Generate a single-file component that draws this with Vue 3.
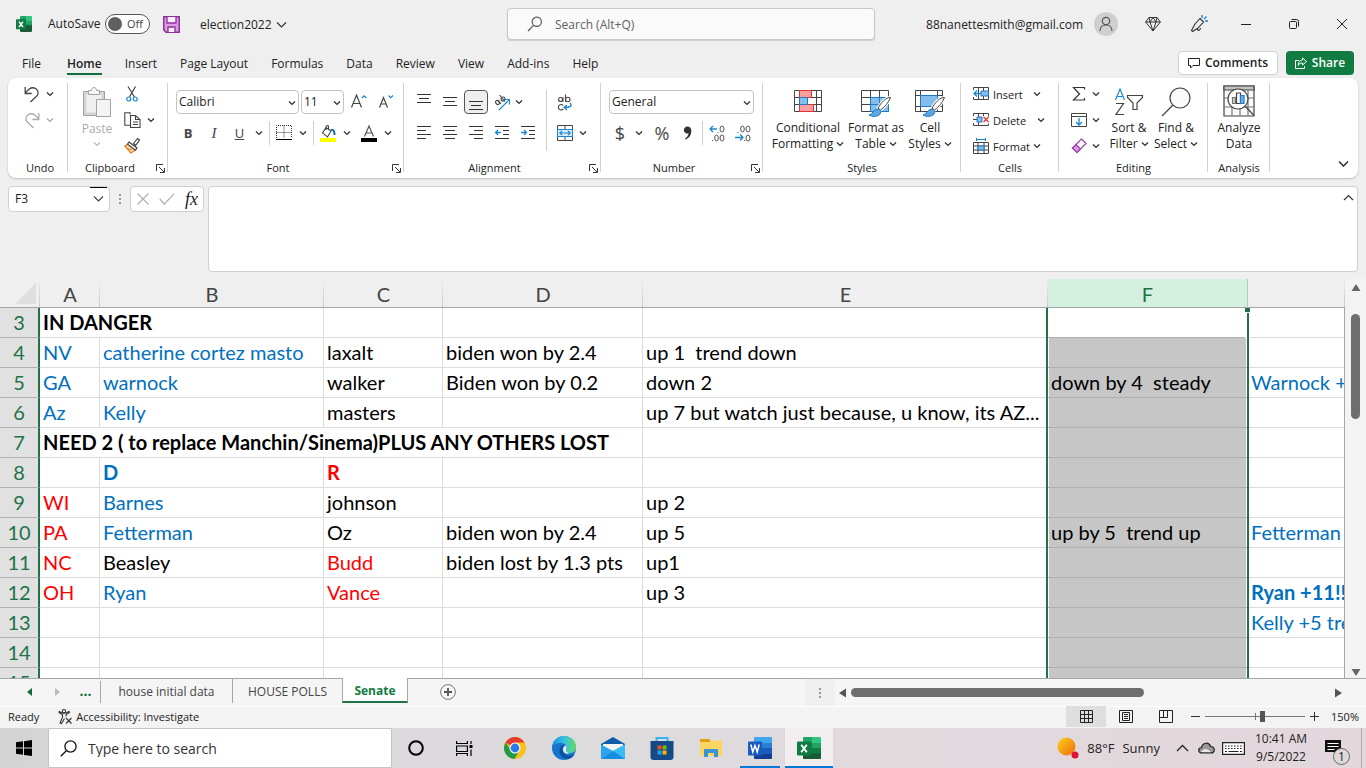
<script setup>
import { h, ref } from 'vue'

const Chevron = (props) =>
  h('svg', { class: 'chev', width: 8, height: 8, viewBox: '0 0 8 8', fill: 'none', stroke: props.color || '#333', 'stroke-width': 1.4 }, [
    h('path', { d: 'M1 2.5 4 5.4 7 2.5' })
  ])
Chevron.props = ['color']

const Launcher = () =>
  h('svg', { width: 9, height: 9, viewBox: '0 0 9 9', fill: 'none', stroke: '#333', 'stroke-width': 1 }, [
    h('path', { d: 'M.5 7V.5H7M3 3l5 5M8.5 4v4.500H4' })
  ])

const tabs = ['File', 'Home', 'Insert', 'Page Layout', 'Formulas', 'Data', 'Review', 'View', 'Add-ins', 'Help']
const active = ref('Home')

const columns = [
  { name: 'A', cls: 'col-a' },
  { name: 'B', cls: 'col-b' },
  { name: 'C', cls: 'col-c' },
  { name: 'D', cls: 'col-d' },
  { name: 'E', cls: 'col-e' },
  { name: 'F', cls: 'col-f' },
  { name: '', cls: 'col-g' }
]

const c = (text, tone = '', span = 1) => ({ text, tone, span })
const e = () => c('')
const rows = [
  { n: 3, cells: [c('IN DANGER', 'bold', 2), e(), e(), e(), e(), e()] },
  { n: 4, cells: [c('NV', 'blue'), c('catherine cortez masto', 'blue'), c('laxalt'), c('biden won by 2.4'), c('up 1  trend down'), e(), e()] },
  { n: 5, cells: [c('GA', 'blue'), c('warnock', 'blue'), c('walker'), c('Biden won by 0.2'), c('down 2'), c('down by 4  steady'), c('Warnock +4', 'blue')] },
  { n: 6, cells: [c('Az', 'blue'), c('Kelly', 'blue'), c('masters'), e(), c('up 7 but watch just because, u know, its AZ...'), e(), e()] },
  { n: 7, cells: [c('NEED 2 ( to replace Manchin/Sinema)PLUS ANY OTHERS LOST', 'bold', 4), e(), e(), e()] },
  { n: 8, cells: [e(), c('D', 'blue bold'), c('R', 'red bold'), e(), e(), e(), e()] },
  { n: 9, cells: [c('WI', 'red'), c('Barnes', 'blue'), c('johnson'), e(), c('up 2'), e(), e()] },
  { n: 10, cells: [c('PA', 'red'), c('Fetterman', 'blue'), c('Oz'), c('biden won by 2.4'), c('up 5'), c('up by 5  trend up'), c('Fetterman', 'blue')] },
  { n: 11, cells: [c('NC', 'red'), c('Beasley'), c('Budd', 'red'), c('biden lost by 1.3 pts'), c('up1'), e(), e()] },
  { n: 12, cells: [c('OH', 'red'), c('Ryan', 'blue'), c('Vance', 'red'), e(), c('up 3'), e(), c('Ryan +11!!', 'blue bold')] },
  { n: 13, cells: [e(), e(), e(), e(), e(), e(), c('Kelly +5 trend', 'blue')] },
  { n: 14, cells: [e(), e(), e(), e(), e(), e(), e()] },
  { n: 15, cells: [e(), e(), e(), e(), e(), e(), e()] }
]
const isF = (row, i) => i === row.cells.length - 2
</script>

<template>
  <div class="app">
    <header class="titlebar">
      <div class="tb-left">
        <svg class="xl-logo" width="16" height="16" viewBox="0 0 24 24">
          <path fill="#21a366" d="M8 0h8v8H6V2a2 2 0 0 1 2-2z" /><path fill="#33c481" d="M15 0h8a1 1 0 0 1 1 1v7h-9z" />
          <path fill="#107c41" d="M6 8h9v8H6zM15 8h9v8h-9z" /><path fill="#21a366" d="M15 8h9v5h-9z" /><path fill="#185c37" d="M6 15h18v7a2 2 0 0 1-2 2H8a2 2 0 0 1-2-2z" />
          <rect y="5" width="15" height="15" rx="1" fill="#107c41" /><path d="M4.500 8.500l6 8M10.500 8.500l-6 8" stroke="#fff" stroke-width="2.200" />
        </svg>
        <label class="autosave">AutoSave
          <span class="toggle"><input type="checkbox" /><span>Off</span></span>
        </label>
        <button class="save" aria-label="Save">
          <svg width="17" height="17" viewBox="0 0 17 17"><path d="M.8.800h15.400v15.400H3L.8 14z" fill="#dc9be2" stroke="#8d2f9c" stroke-width="1.500" /><path d="M4 1v6h9V1M5 16v-5h7v5" fill="#f7f0f8" stroke="#8d2f9c" stroke-width="1.300" /></svg>
        </button>
        <button class="docname">election2022
          <svg width="11" height="8" viewBox="0 0 11 8" fill="none" stroke="#333" stroke-width="1.200"><path d="M1 1.500 5.500 6 10 1.500" /></svg>
        </button>
      </div>
      <label class="search">
        <svg width="16" height="16" viewBox="0 0 16 16" fill="none" stroke="#555" stroke-width="1.200"><circle cx="9.800" cy="5.800" r="4.600" /><path d="M6.500 9.300 1 15" /></svg>
        <input type="text" aria-label="Search" placeholder="Search (Alt+Q)" />
      </label>
      <div class="tb-right">
        <span class="email">88nanettesmith@gmail.com</span>
        <button class="avatar" aria-label="Account">
          <svg width="16" height="16" viewBox="0 0 16 16" fill="none" stroke="#555" stroke-width="1.200"><circle cx="8" cy="5" r="3.700" /><path d="M2 15c0-8 12-8 12 0" /></svg>
        </button>
        <button class="tb-btn" aria-label="Premium">
          <svg width="16" height="16" viewBox="0 0 16 16" fill="none" stroke="#333" stroke-width="1"><path d="M4 1.500h8L15.400 6 8 15 .6 6zM.6 6h14.800M4 1.500 5 6l3 9 3-9 1-4.500M5 6l3-4.500L11 6" /></svg>
        </button>
        <button class="tb-btn" aria-label="What's new">
          <svg width="18" height="18" viewBox="0 0 18 18" fill="none" stroke="#333" stroke-width="1.100"><path d="M10 3.500 13.500 7 8 13l-5.500 3.500-1-1L5 9zM7 14c1 2 3 2 3.500-1" /><path stroke="#1a86d0" stroke-width="1.400" d="M12 3V0M14 4l2.500-2.500M15 6h3" /></svg>
        </button>
        <button class="win-btn" aria-label="Minimize"><svg width="12" height="12" viewBox="0 0 12 12" stroke="#222"><path d="M1 6.500h10" /></svg></button>
        <button class="win-btn" aria-label="Restore"><svg width="12" height="12" viewBox="0 0 12 12" fill="none" stroke="#222"><rect x="1.500" y="3.500" width="7" height="7" rx="1" /><path d="M3.500 1.500h5a2 2 0 0 1 2 2v5" /></svg></button>
        <button class="win-btn" aria-label="Close"><svg width="12" height="12" viewBox="0 0 12 12" stroke="#222"><path d="M1 1l10 10M11 1 1 11" /></svg></button>
      </div>
    </header>

    <nav class="menu">
      <button v-for="t in tabs" :key="t" class="menu-tab" :class="{ on: t === active }" @click="active = t">{{ t }}</button>
      <span class="grow"></span>
      <button class="comments">
        <svg width="12" height="12" viewBox="0 0 12 12" fill="none" stroke="#222"><path d="M.5 1.500h11v7H5L2.500 11V8.500h-2z" /></svg>Comments
      </button>
      <button class="share">
        <svg width="12" height="13" viewBox="0 0 12 13" fill="none" stroke="#fff"><path d="M4 3.500H.5v8h9V9M7.500 1l4 3.500-4 3.500V6C5 6 4 7 3.200 8.500 3.200 5 5 3 7.500 3z" /></svg>Share
      </button>
    </nav>

    <section class="ribbon">
      <div class="group g-undo">
        <div class="stack">
          <div class="row26 undo-row">
            <button aria-label="Undo"><svg width="16" height="17" viewBox="0 0 16 17" fill="none" stroke="#444" stroke-width="1.300"><path d="M1.200 1v6.500h6.500M1.500 7C5 2 9 .8 12 2.800c3 2.200 2.500 5.500.5 7.500L6.500 16" /></svg></button>
            <button aria-label="Undo list"><Chevron /></button>
          </div>
          <div class="row26 undo-row">
            <button aria-label="Redo"><svg width="16" height="17" viewBox="0 0 16 17" fill="none" stroke="#aaa" stroke-width="1.300"><path d="M14.800 1v6.500H8.300M14.500 7C11 2 7 .8 4 2.800 1 5 1.500 8.300 3.500 10.300L9.500 16" /></svg></button>
            <button aria-label="Redo list"><Chevron color="#aaa" /></button>
          </div>
        </div>
        <div class="glabel"><span>Undo</span></div>
      </div>

      <div class="group g-clip">
        <div class="gbody">
          <button class="big paste">
            <svg width="28" height="30" viewBox="0 0 28 30" stroke="#a3a3a3"><path d="M.5 4.500h21v24H.5z" fill="#d4d4d4" /><path d="M3.500 7.500h15v18h-15z" fill="#f0f0f0" stroke="none" /><path d="M5.500 7.500v-4h3c0-4 5-4 5 0h3v4z" fill="#f6f6f6" /><path d="M13.500 12.500h14v17h-14z" fill="#f4f4f4" /></svg>
            <span>Paste</span><Chevron color="#bbb" />
          </button>
          <div class="stack clip-stack">
            <div class="row26"><button aria-label="Cut"><svg width="12" height="16" viewBox="0 0 12 16" fill="none" stroke="#444" stroke-width="1.200"><path d="M2 .5 8.500 11M9.500.5 3.500 11" /><g stroke="#1a86d0"><circle cx="2.700" cy="13" r="2" /><circle cx="9.200" cy="13" r="2" /></g></svg></button></div>
            <div class="row26"><button aria-label="Copy"><svg width="17" height="16" viewBox="0 0 17 16" fill="#fff" stroke="#444" stroke-width="1.100"><path d="M6 2.500V.7H.8v12.600h5" /><path d="M6.500 3.500h5l4.500 4v8H6.500zM11.500 3.500v4H16M9 10h5M9 12.500h5" /></svg></button><button aria-label="Copy options"><Chevron /></button></div>
            <div class="row26"><button aria-label="Format Painter"><svg width="16" height="16" viewBox="0 0 16 16" fill="none" stroke="#444" stroke-width="1.200"><path d="m9.500 5.500 4-5 2 1.500-4 5.500z" fill="#fff" /><path d="M3.500 6.500.8 8l6 7 4.700-3z" fill="#fce0bd" stroke="#e07a10" /><path d="M4 11l4 .5" stroke="#e07a10" /><path d="M5 4 13 10l-1.500 2.200L3.500 6.200z" fill="#fff" /></svg></button></div>
          </div>
        </div>
        <div class="glabel"><span>Clipboard</span><button class="launch" aria-label="Clipboard options"><Launcher /></button></div>
      </div>

      <div class="group g-font">
        <div class="two">
          <div class="font-a">
            <span class="combo"><select aria-label="Font"><option>Calibri</option></select><Chevron /></span>
            <span class="combo"><select aria-label="Font size"><option>11</option></select><Chevron /></span>
            <button aria-label="Increase font size"><svg width="17" height="16" viewBox="0 0 17 16" fill="none" stroke="#444" stroke-width="1.200"><path d="M.5 13.500 5.500 1l5 12.500M2.200 9.500h6.600" /><path d="m11 4 2.200-2.200L15.400 4" stroke="#1a86d0" /></svg></button>
            <button aria-label="Decrease font size"><svg width="16" height="16" viewBox="0 0 16 16" fill="none" stroke="#444" stroke-width="1.200"><path d="M.5 13.500 4.500 3.500l4 10M2 10h5" /><path d="m9.500 1.500 2.200 2.200L14 1.500" stroke="#1a86d0" /></svg></button>
          </div>
          <div class="font-b">
            <button class="fmt"><b>B</b></button><button class="fmt"><i>I</i></button><button class="fmt"><u>U</u></button><button aria-label="Underline styles"><Chevron /></button>
            <i class="vsep"></i>
            <button aria-label="Borders"><svg width="16" height="16" viewBox="0 0 16 16" fill="none" stroke="#333"><path stroke-dasharray="1 1" d="M.5 13V.5h15V13M8 .5V13M.5 7.500h15" /><path d="M0 14.500h16" stroke="#000" /></svg></button><button aria-label="Border styles"><Chevron /></button>
            <i class="vsep"></i>
            <button aria-label="Fill color"><svg width="16" height="17" viewBox="0 0 16 17" fill="none" stroke="#444" stroke-width="1.100"><path d="M6 2.500 2.500 8l5 4L11 6zM6 5V1.500q2-2 2.500 0V5" fill="#fff" /><path d="M11 5c3-1 3.500 2 3.500 5" stroke="#1a6fb5" stroke-width="2" /><path d="M0 15h16" stroke="#ff0" stroke-width="4" /></svg></button><button aria-label="Fill colors"><Chevron /></button>
            <span></span>
            <button aria-label="Font color"><svg width="16" height="17" viewBox="0 0 16 17" fill="none" stroke="#555" stroke-width="1.200"><path d="M3.500 11.500 8 1l4.500 10.500M5 8h6" /><path d="M0 15h16" stroke="#000" stroke-width="4" /></svg></button><button aria-label="Font colors"><Chevron /></button>
          </div>
        </div>
        <div class="glabel"><span>Font</span><button class="launch" aria-label="Font options"><Launcher /></button></div>
      </div>

      <div class="group g-align">
        <div class="gbody">
          <div class="two">
            <div class="al-row">
              <button aria-label="Top align"><svg width="14" height="16" viewBox="0 0 14 16" stroke="#333"><path d="M0 .5h14M2 4.500h10M0 8.500h14" /></svg></button>
              <button aria-label="Middle align"><svg width="14" height="16" viewBox="0 0 14 16" stroke="#333"><path d="M0 3.500h14M2 7.500h10M0 11.500h14" /></svg></button>
              <button class="pressed" aria-label="Bottom align"><svg width="14" height="16" viewBox="0 0 14 16" stroke="#333"><path d="M0 7.500h14M2 11.500h10M0 15.500h14" /></svg></button>
              <button aria-label="Orientation"><svg width="17" height="17" viewBox="0 0 17 17" fill="none" stroke="#444" stroke-width="1.100"><ellipse cx="3.500" cy="8.500" rx="1.700" ry="2.200" transform="rotate(-40 3.500 8.500)" /><path d="m4 6 3 4M5.500 1 11 7.500" /><circle cx="9" cy="5" r="2" /><path d="m5 16 10-10M10.500 5.500h5v5" stroke="#1a86d0" /></svg></button>
              <button aria-label="Orientation options"><Chevron /></button>
            </div>
            <div class="al-row">
              <button aria-label="Align left"><svg width="14" height="14" viewBox="0 0 14 14" stroke="#333"><path d="M0 .5h14M0 4.500h9M0 8.500h14M0 12.500h9" /></svg></button>
              <button aria-label="Center"><svg width="14" height="14" viewBox="0 0 14 14" stroke="#333"><path d="M0 .5h14M2 4.500h10M0 8.500h14M2 12.500h10" /></svg></button>
              <button aria-label="Align right"><svg width="14" height="14" viewBox="0 0 14 14" stroke="#333"><path d="M0 .5h14M5 4.500h9M0 8.500h14M5 12.500h9" /></svg></button>
              <button aria-label="Decrease indent"><svg width="14" height="14" viewBox="0 0 14 14" stroke="#333" fill="none"><path d="M0 .5h14M8 4.500h6M8 8.500h6M0 12.500h14" /><path stroke="#1a86d0" stroke-width="1.300" d="M6 6.500H.8M3 4 .6 6.500 3 9" /></svg></button>
              <button class="indent" aria-label="Increase indent"><svg width="14" height="14" viewBox="0 0 14 14" stroke="#333" fill="none"><path d="M0 .5h14M8 4.500h6M8 8.500h6M0 12.500h14" /><path stroke="#1a86d0" stroke-width="1.300" d="M0 6.500h5.500M3 4l2.500 2.500L3 9" /></svg></button>
            </div>
          </div>
          <i class="vsep tall"></i>
          <div class="two wrap-col">
            <div class="wr-row"><button aria-label="Wrap text"><svg width="16" height="17" viewBox="0 0 16 17" fill="none" stroke="#444" stroke-width="1.100"><circle cx="3.600" cy="5.500" r="2" /><path d="M6 3.300v4.500M8.500.5v7.300M6.300 11.500c-2-2-5-.8-5 1.700s3 3.700 5 1.800" /><circle cx="10.800" cy="5.500" r="2.200" /><path d="M13 9c2.500 3 0 4.500-5.500 4.500M9.800 11l-2.600 2.500L10 16" stroke="#1a86d0" stroke-width="1.400" /></svg></button></div>
            <div class="wr-row"><button aria-label="Merge and center"><svg width="16" height="16" viewBox="0 0 16 16" fill="none" stroke="#444"><path d="M.5.500h15v15H.5zM8 .5V4M8 12v3.500" /><path fill="#d8ecfa" stroke="#1a86d0" d="M.5 4.500h15v7H.5z" /><path stroke="#1a86d0" stroke-width="1.200" d="M2.500 8h11M5 5.800 2.800 8 5 10.200M11 5.800 13.200 8 11 10.200" /></svg></button><button aria-label="Merge options"><Chevron /></button></div>
          </div>
        </div>
        <div class="glabel"><span>Alignment</span><button class="launch" aria-label="Alignment options"><Launcher /></button></div>
      </div>

      <div class="group g-num">
        <div class="two">
          <div class="num-a"><span class="combo"><select aria-label="Number format"><option>General</option></select><Chevron /></span></div>
          <div class="num-b">
            <button class="sym">$</button><button aria-label="Currencies"><Chevron /></button><span></span><button class="sym">%</button>
            <button aria-label="Comma style"><svg width="10" height="14" viewBox="0 0 10 14"><path fill="#333" d="M4.500.5A3.500 3.500 0 1 0 5.500 7.300C5.500 9.500 4 11.500 2 12.500l.5 1C6.500 12 8.500 8.500 8.300 4.500 8.200 2 6.500.5 4.500.5z" /></svg></button>
            <i class="vsep"></i>
            <button aria-label="Increase decimal"><svg width="16" height="17" viewBox="0 0 16 17" fill="none" stroke="#555"><path stroke="#1a86d0" stroke-width="1.300" d="M8 4H1M4 1 1 4l3 3" /><ellipse cx="13" cy="4" rx="2" ry="3" /><path d="M8.500 7.500h1M3 15.500h1" /><ellipse cx="7.500" cy="13" rx="1.800" ry="3" /><ellipse cx="13" cy="13" rx="2" ry="3" /></svg></button>
            <button aria-label="Decrease decimal"><svg width="16" height="17" viewBox="0 0 16 17" fill="none" stroke="#555"><path stroke="#1a86d0" stroke-width="1.300" d="M0 12.500h8M5 9.500l3 3-3 3" /><ellipse cx="13" cy="13" rx="2" ry="3" /><path d="M2.500 7.500h1M9 15.500h1" /><ellipse cx="7.500" cy="4" rx="1.800" ry="3" /><ellipse cx="13" cy="4" rx="2" ry="3" /></svg></button>
          </div>
        </div>
        <div class="glabel"><span>Number</span><button class="launch" aria-label="Number options"><Launcher /></button></div>
      </div>

      <div class="group g-styles">
        <div class="gbody">
          <button class="big w-cond">
            <svg width="28" height="30" viewBox="0 0 28 30" fill="none" stroke="#444"><path d="M.5 3.500h27v21H.5zM.5 10.500h27M.5 17.500h27M5.500 3.500v21M22.500 3.500v21" /><path fill="#ff9e9e" stroke="#d33" d="M5.500 3.500h12v7h-12zM5.500 17.500h14v7h-14z" /><path fill="#83beec" stroke="#2079c4" d="M5.500 10.500h8v7h-8z" /></svg>
            <span>Conditional</span><span>Formatting <Chevron /></span>
          </button>
          <button class="big w-table">
            <svg width="30" height="30" viewBox="0 0 30 30" fill="none" stroke="#444"><path d="M.5 3.500h27v21H.5zM.5 10.500h27M.5 17.500h27M9.500 3.500v21M18.500 3.500v21" /><path fill="#83beec" stroke="#2079c4" d="M9.500 10.500h18v14h-18zM9.500 17.500h18M18.500 10.500v14" /><path fill="#fff" stroke="#fff" stroke-width="3" d="M17 21C20 16 25 10 29.500 10.500c-2 5.500-6 9.500-10 12.500z" /><path fill="#fff" d="M17 21C20 16 25 10 29.500 10.500c-2 5.500-6 9.500-10 12.500z" /><path fill="#5ba5e0" stroke="#2079c4" d="M16 22c3 0 5 2 3 5-2 3-8 3-11 1 4-1 4-5 8-6z" /></svg>
            <span>Format as</span><span>Table <Chevron /></span>
          </button>
          <button class="big w-cell">
            <svg width="30" height="30" viewBox="0 0 30 30" fill="none" stroke="#444"><path d="M.5 3.500h27v21H.5zM.5 8.500h27M5.500 3.500v21M22.500 3.500v21M.5 19.500h27" /><path fill="#83beec" stroke="#2079c4" d="M5.500 8.500h17v11h-17z" /><path fill="#fff" stroke="#fff" stroke-width="3" d="M17 21C20 16 25 10 29.500 10.500c-2 5.500-6 9.500-10 12.500z" /><path fill="#fff" d="M17 21C20 16 25 10 29.500 10.500c-2 5.500-6 9.500-10 12.500z" /><path fill="#5ba5e0" stroke="#2079c4" d="M16 22c3 0 5 2 3 5-2 3-8 3-11 1 4-1 4-5 8-6z" /></svg>
            <span>Cell</span><span>Styles <Chevron /></span>
          </button>
        </div>
        <div class="glabel"><span>Styles</span></div>
      </div>

      <div class="group g-cells">
        <div class="stack">
          <div class="row26 cells-row"><button><svg width="16" height="16" viewBox="0 0 16 16" fill="none" stroke="#444"><path d="M.5 4V1.500h15v12H.5V11M5.500 1.500v12M10.500 1.500v12" /><path fill="#83beec" stroke="#2079c4" d="M8 5h7.500v5H8z" /><path stroke="#1a86d0" stroke-width="1.300" d="M8 7.500H1M4 4.500l-3 3 3 3" /></svg><span>Insert</span></button><button aria-label="Insert options"><Chevron /></button></div>
          <div class="row26 cells-row wide"><button><svg width="16" height="16" viewBox="0 0 16 16" fill="none" stroke="#444"><path d="M.5 4V1.500h15v3M.5 11v2.500h15v-2M5.500 1.500v12M0 7.500h4M10.500 1.500V4" /><path fill="#83beec" stroke="#2079c4" d="M4 5h5v5H4z" /><path stroke="#e03a3a" stroke-width="1.400" d="m10.500 5 5 5M15.500 5l-5 5" /></svg><span>Delete</span></button><button aria-label="Delete options"><Chevron /></button></div>
          <div class="row26 cells-row"><button><svg width="16" height="16" viewBox="0 0 16 16" fill="none" stroke="#444"><path d="M.5 4.500h15v11H.5zM.5 8h15M.5 12h15M5 4.500v11M11 4.500v11" /><path fill="#83beec" stroke="#2079c4" d="M5 8h6v4H5z" /><path stroke="#1a86d0" d="M3.500 0v3M12.500 0v3M3.500 1.500h9" /></svg><span>Format</span></button><button aria-label="Format options"><Chevron /></button></div>
        </div>
        <div class="glabel"><span>Cells</span></div>
      </div>

      <div class="group g-edit">
        <div class="gbody">
          <div class="stack edit-stack">
            <div class="row26"><button aria-label="AutoSum"><svg width="14" height="16" viewBox="0 0 14 16" fill="none" stroke="#333" stroke-width="1.200"><path d="M12.500 3.500V1.500H1.500L7.500 8l-6 6h11v-2" /></svg></button><button aria-label="AutoSum options"><Chevron /></button></div>
            <div class="row26"><button aria-label="Fill"><svg width="16" height="15" viewBox="0 0 16 15" fill="none" stroke="#444"><path d="M.5.500h15v13H.5zM.5 3.500h15" /><path stroke="#1a86d0" stroke-width="1.300" d="M8 5v7M5 9l3 3 3-3" /></svg></button><button aria-label="Fill options"><Chevron /></button></div>
            <div class="row26"><button aria-label="Clear"><svg width="16" height="16" viewBox="0 0 16 16" stroke="#9a3fa8" stroke-width="1.200"><path d="M10.500 1 15 5.500l-9 9L1.500 10z" fill="#fff" /><path d="m5 6.500 4.500 4.500L6 14.500 1.500 10z" fill="#d79be0" /></svg></button><button aria-label="Clear options"><Chevron /></button></div>
          </div>
          <button class="big w-sort">
            <svg width="30" height="30" viewBox="0 0 30 30" fill="none" stroke="#444" stroke-width="1.200"><path stroke="#1a86d0" d="M1.500 13 6 2l4.500 11M3 9.500h6" /><path d="M2 16.500h7.500L2 27.500h8M13.500 8.500h15v2L23 16v6.500h-4V16l-5.500-5.500z" /></svg>
            <span>Sort &amp;</span><span>Filter <Chevron /></span>
          </button>
          <button class="big w-find">
            <svg width="30" height="30" viewBox="0 0 30 30" fill="none" stroke="#444" stroke-width="1.200"><circle cx="19" cy="11" r="10" fill="#fafafa" /><path d="M12 18 1 29" /></svg>
            <span>Find &amp;</span><span>Select <Chevron /></span>
          </button>
        </div>
        <div class="glabel"><span>Editing</span></div>
      </div>

      <div class="group g-an">
        <div class="gbody">
          <button class="big w-an">
            <svg width="32" height="32" viewBox="0 0 32 32" fill="none" stroke="#444" stroke-width="1.200"><path d="M1 1h30v30H1z" fill="#fafafa" /><path d="M1 1h30v4H1z" fill="#c4c4bc" /><path d="M1 13h30M1 22h30M9 22v9M17 22v9M25 5v26" stroke="#777" /><circle cx="15" cy="14" r="10" fill="#fff" /><path d="m22.500 21.500 8.500 9" /><path d="M9.500 12.500h3v6h-3z" fill="#ccc" stroke="#777" /><path d="M13.500 8h4v10.500h-4z" fill="#fff" /><path d="M17.500 10.500h3.500v8h-3.500z" fill="#6db3ee" stroke="#2079c4" /></svg>
            <span>Analyze</span><span>Data</span>
          </button>
        </div>
        <div class="glabel"><span>Analysis</span></div>
      </div>
      <button class="collapse" aria-label="Collapse ribbon"><svg width="11" height="8" viewBox="0 0 11 8" fill="none" stroke="#222" stroke-width="1.300"><path d="M1 1.500 5.500 6 10 1.500" /></svg></button>
    </section>

    <section class="formula">
      <div class="namebox"><input type="text" aria-label="Name box" value="F3" /><svg width="11" height="8" viewBox="0 0 11 8" fill="none" stroke="#444" stroke-width="1.200"><path d="M1 1.500 5.500 6 10 1.500" /></svg></div>
      <span class="dots"><i></i><i></i><i></i></span>
      <div class="fxbox">
        <button aria-label="Cancel"><svg width="12" height="12" viewBox="0 0 12 12" stroke="#b0b0b0" stroke-width="1.200"><path d="m.5.500 11 11M11.500.500l-11 11" /></svg></button>
        <button aria-label="Enter"><svg width="16" height="12" viewBox="0 0 16 12" fill="none" stroke="#b0b0b0" stroke-width="1.200"><path d="m.8 6 4.500 5L15 .8" /></svg></button>
        <button class="fx">fx</button>
      </div>
      <div class="fbar">
        <textarea aria-label="Formula bar"></textarea>
        <button aria-label="Collapse formula bar"><svg width="11" height="7" viewBox="0 0 11 7" fill="none" stroke="#333" stroke-width="1.200"><path d="M1 6 5.500 1.500 10 6" /></svg></button>
      </div>
    </section>

    <main class="sheet">
      <div class="grid-wrap">
        <table class="grid">
          <colgroup><col class="col-h" /><col v-for="k in columns" :key="k.cls" :class="k.cls" /></colgroup>
          <thead>
            <tr>
              <th class="corner"><svg width="22" height="22" viewBox="0 0 22 22"><path d="M21 0v21H0z" fill="#dfdfdf" /></svg></th>
              <th v-for="k in columns" :key="k.cls" :class="{ sel: k.name === 'F' }">{{ k.name }}</th>
            </tr>
          </thead>
          <tbody>
            <tr v-for="r in rows" :key="r.n">
              <th>{{ r.n }}</th>
              <td v-for="(d, i) in r.cells" :key="i" :colspan="d.span" :class="[d.tone, { f: isF(r, i), top: isF(r, i) && r.n === 3 }]"><div>{{ d.text }}</div></td>
            </tr>
          </tbody>
        </table>
      </div>
      <div class="vscroll">
        <svg width="10" height="8" viewBox="0 0 10 8"><path d="M5 0 9.500 7H.5z" fill="#666" /></svg>
        <span class="vtrack"><i></i></span>
        <svg width="10" height="8" viewBox="0 0 10 8"><path d="M.5 0h9L5 7z" fill="#666" /></svg>
      </div>
    </main>

    <div class="sheetbar">
      <div class="sheets">
        <button class="nav" aria-label="Previous sheet"><svg width="5" height="8" viewBox="0 0 5 8"><path d="M5 0v8L0 4z" fill="#0f6b37" /></svg></button>
        <button class="nav" aria-label="Next sheet"><svg width="5" height="8" viewBox="0 0 5 8"><path d="M0 0v8l5-4z" fill="#bbb" /></svg></button>
        <button class="more">...</button>
        <button class="stab t1">house initial data</button>
        <button class="stab t2">HOUSE POLLS</button>
        <button class="stab on">Senate</button>
        <button class="add" aria-label="New sheet"><svg width="16" height="16" viewBox="0 0 16 16" fill="none" stroke="#777"><circle cx="8" cy="8" r="7.400" /><path stroke="#555" stroke-width="1.800" d="M8 4v8M4 8h8" /></svg></button>
      </div>
      <div class="hscroll">
        <span class="handle"><span class="dots"><i></i><i></i><i></i></span></span>
        <svg width="8" height="10" viewBox="0 0 8 10"><path d="M7 .5v9L0 5z" fill="#555" /></svg>
        <span class="htrack"><i></i></span>
        <svg width="8" height="10" viewBox="0 0 8 10"><path d="M0 .5v9L7 5z" fill="#555" /></svg>
      </div>
    </div>

    <footer class="status">
      <span>Ready</span>
      <button class="access"><svg width="14" height="15" viewBox="0 0 14 15" fill="none" stroke="#333" stroke-width="1.100"><circle cx="6" cy="2.200" r="1.700" /><path d="M.7 3.500 4.500 5.500v3L2 14l1.500.5 3-5M11.500 3.500 8 5.500v2M.7 3.500 1.300 2.500 4 4h4l3-1.500.8 1M8 9l5.500 5.500M13.500 9 8 14.500" /></svg>Accessibility: Investigate</button>
      <span class="grow"></span>
      <button class="view on" aria-label="Normal"><svg width="13" height="13" viewBox="0 0 13 13" fill="none" stroke="#222"><path d="M.5.500h12v12H.5zM4.500.500v12M8.500.500v12M.5 4.500h12M.5 8.500h12" /></svg></button>
      <button class="view" aria-label="Page layout"><svg width="14" height="13" viewBox="0 0 14 13" fill="none" stroke="#222"><path d="M.5.500h13v12H.5zM3.500 2.500h7v8h-7zM5 4.500h4M5 6.500h4M5 8.500h4" /></svg></button>
      <button class="view" aria-label="Page break preview"><svg width="14" height="13" viewBox="0 0 14 13" fill="none" stroke="#222"><path d="M.5.500h13v12H.5zM.5 7.500h8V.5M4.500.500v7" /></svg></button>
      <button class="zoom" aria-label="Zoom out"><svg width="9" height="9" viewBox="0 0 9 9" stroke="#333"><path d="M0 4.500h9" /></svg></button>
      <input class="slider" type="range" aria-label="Zoom" value="58" />
      <button class="zoom" aria-label="Zoom in"><svg width="9" height="9" viewBox="0 0 9 9" stroke="#333"><path d="M0 4.500h9M4.500 0v9" /></svg></button>
      <span class="pct">150%</span>
    </footer>

    <div class="taskbar">
      <button class="start" aria-label="Start"><svg width="16" height="16" viewBox="0 0 16 16"><path d="M0 2.300 7 1.300v6.300H0zM8 1.200 16 0v7.600H8zM0 8.500h7v6.300l-7-1zM8 8.500h8V16l-8-1.100z" /></svg></button>
      <label class="tsearch"><svg width="17" height="17" viewBox="0 0 17 17" fill="none" stroke="#111" stroke-width="1.300"><circle cx="10.500" cy="6.500" r="5.600" /><path d="M6.500 10.500.8 16.200" /></svg><input type="text" aria-label="Windows search" placeholder="Type here to search" /></label>
      <button class="tk ct" aria-label="Cortana"><svg width="16" height="16" viewBox="0 0 16 16"><circle cx="8" cy="8" r="6.800" fill="none" stroke="#000" stroke-width="2" /></svg></button>
      <button class="tk tv" aria-label="Task view"><svg width="17" height="15" viewBox="0 0 17 15" fill="none" stroke="#000" stroke-width="1.200"><path d="M.6 0v2.500h10.800V0M.6 5h10.800v5.500H.6zM.6 15v-2.500h10.800V15M15 0v3M15 8.500V15" /><path d="M13.500 4h3v3h-3z" fill="#000" stroke="none" /></svg></button>
      <button class="tk" aria-label="Chrome"><svg width="24" height="24" viewBox="0 0 24 24"><circle cx="12" cy="12" r="11" fill="#fbc116" /><path d="M12 12 2.500 6.500A11 11 0 0 1 21.500 6.500H12z" fill="#e33b2e" /><path d="M2.500 6.500A11 11 0 0 0 11.500 23l5-8.500L12 12l-4 2z" fill="#229a48" /><circle cx="12" cy="12" r="5.500" fill="#fff" /><circle cx="12" cy="12" r="4.400" fill="#2a78ea" /></svg></button>
      <button class="tk" aria-label="Edge"><svg width="24" height="24" viewBox="0 0 24 24"><defs><linearGradient id="eg" x1="0" x2="1"><stop stop-color="#1a8fe0" /><stop offset=".5" stop-color="#35c1e0" /><stop offset="1" stop-color="#62dd5e" /></linearGradient></defs><circle cx="12" cy="12" r="12" fill="#1675cf" /><path d="M.2 11C1 4 6 0 12 0c7 0 12 5 12 11 0 4-3 6-6 6-3 0-4.500-1.500-4-3 2-3 0-7-5-7C5 7 1.500 8.500.2 11z" fill="url(#eg)" /><path d="M7.500 15c0 5 5 8.500 10 7.500 2-.5 4-2 5-4-4 2.500-11 1.500-12-4-.5-3 1-5 2-6-3 .5-5 3-5 6.500z" fill="#0c4f9e" /><path d="M13.500 9.500c2 1.500.8 3.300.5 4.500-.4 2 2 3 4 3-3 1.500-6.500.5-7-3-.2-2 1-4 2.500-4.500z" fill="#e7e9ee" /></svg></button>
      <button class="tk" aria-label="Mail"><svg width="24" height="23" viewBox="0 0 24 23"><path d="M0 7 12 0l12 7v3H0z" fill="#0a5ea8" /><path d="M2 7h20v7l-10 3L2 14z" fill="#f4f4f4" /><path d="M0 7.500 12 14 24 7.500V22H0z" fill="#2aa5ea" /><path d="m0 22 12-8 12-6.500V22z" fill="#37bdf3" /><path d="m0 22 12-8 12 8z" fill="#1a8ce0" /></svg></button>
      <button class="tk" aria-label="Store"><svg width="24" height="24" viewBox="0 0 24 24"><path d="M6.500 6V2h11v4" fill="none" stroke="#35b5f0" stroke-width="2" /><path d="M.5 5h23v16q0 3-3 3h-17q-3 0-3-3z" fill="#154a86" /><path d="M7.500 9.500h4v4h-4z" fill="#f04e23" /><path d="M12.500 9.500h4v4h-4z" fill="#7fba00" /><path d="M7.500 14.500h4v4h-4z" fill="#16a8ee" /><path d="M12.500 14.500h4v4h-4z" fill="#ffb900" /></svg></button>
      <button class="tk" aria-label="File Explorer"><svg width="22" height="20" viewBox="0 0 22 20"><path d="M0 2q0-1 1-1h8l2 3v4H0z" fill="#e0a010" /><path d="M0 4h10l2-1.500h9q1 0 1 1V18H0z" fill="#fcd562" /><path d="M4 19v-7q0-1 1-1h12q1 0 1 1v7h-4v-4H8v4z" fill="#3a93d8" /></svg></button>
      <button class="tk run" aria-label="Word"><svg width="24" height="24" viewBox="0 0 24 24"><path fill="#41a5ee" d="M7 1h16a1 1 0 0 1 1 1v5H6V2a1 1 0 0 1 1-1z" /><path fill="#2b7cd3" d="M6 7h18v5H6z" /><path fill="#185abd" d="M6 12h18v6H6z" /><path fill="#103f91" d="M6 18h18v4a1 1 0 0 1-1 1H7a1 1 0 0 1-1-1z" /><rect y="5.500" width="14" height="14" rx="1" fill="#185abd" /><path d="M2.800 8.500 4.800 16 7 9.500 9.200 16l2-7.500" fill="none" stroke="#fff" stroke-width="1.500" /></svg></button>
      <button class="tk run cur" aria-label="Excel"><svg width="24" height="24" viewBox="0 0 24 24"><path fill="#21a366" d="M7 1h8v6H6V2a1 1 0 0 1 1-1z" /><path fill="#33c481" d="M15 1h8a1 1 0 0 1 1 1v5h-9z" /><path fill="#107c41" d="M6 7h9v11H6zM15 12h9v6h-9z" /><path fill="#21a366" d="M15 7h9v5h-9z" /><path fill="#185c37" d="M6 17.500h18V22a1 1 0 0 1-1 1H7a1 1 0 0 1-1-1z" /><rect y="5.500" width="14" height="14" rx="1" fill="#107c41" /><path d="m4.200 8.800 5.600 7.400M9.800 8.800l-5.600 7.400" stroke="#fff" stroke-width="1.900" /></svg></button>
      <span class="grow"></span>
      <button class="weather"><svg width="22" height="22" viewBox="0 0 22 22"><defs><linearGradient id="sun" x1="0" y1="0" x2="1" y2="1"><stop stop-color="#fcd116" /><stop offset="1" stop-color="#ee6b10" /></linearGradient></defs><circle cx="9.500" cy="9.500" r="9" fill="url(#sun)" /><circle cx="18" cy="18" r="3.500" fill="#e01236" /></svg><span>88°F</span><span>Sunny</span></button>
      <button class="tray" aria-label="Hidden icons"><svg width="13" height="8" viewBox="0 0 13 8" fill="none" stroke="#222" stroke-width="1.300"><path d="m1 7 5.500-5.500L12 7" /></svg></button>
      <button class="tray" aria-label="OneDrive"><svg width="17" height="12" viewBox="0 0 17 12" fill="#999" stroke="#222" stroke-width="1.200"><path d="M4 11C0 11-.5 6 3.500 5.500 4.500.500 11-.500 12.500 4.500 17.500 4.500 17.500 11 13 11z" /><path d="M3 10c3-4 6-4 10 0z" fill="#e8e8e8" stroke="none" /></svg></button>
      <button class="tray kb" aria-label="Touch keyboard"><svg width="23" height="13" viewBox="0 0 23 13" fill="#fff" stroke="#222" stroke-width="1.200"><path d="M.6.600h21.800v11.800H.6z" /><path stroke-dasharray="1.500 1.500" d="M3 4h17M3 6.500h17" /><path d="M3 9.500h2M6.500 9.500h10M18 9.500h2" /></svg></button>
      <div class="clock"><span>10:41 AM</span><span>9/5/2022</span></div>
      <button class="notif" aria-label="Notifications"><svg width="24" height="16" viewBox="0 0 24 16"><path d="M0 0h16v12h-3.500v4l-4-4H0z" fill="#111" /><path d="M2.500 3.500h11M2.500 6.500h11M2.500 9.500h7" stroke="#fff" /></svg><span>1</span></button>
      <button class="desk" aria-label="Show desktop"></button>
    </div>
  </div>
</template>

<style>
body { overflow: hidden; }
</style>

<style scoped>
* { box-sizing: border-box; }
.app { height: 100vh; display: flex; flex-direction: column; background: #efefef; color: #222; font: 12px/16px "Open Sans", "Noto Sans", sans-serif; overflow: hidden; }
button, input, select, textarea { font: inherit; color: inherit; border: 0; background: none; padding: 0; margin: 0; outline: 0; }
button { display: inline-flex; align-items: center; justify-content: center; white-space: nowrap; }
svg { flex: none; display: block; overflow: visible; }
.grow { flex: 1; }

.titlebar { display: grid; grid-template-columns: minmax(0, 1fr) minmax(200px, 368px) minmax(0, 1fr); align-items: center; height: 48px; padding-left: 16px; }
.tb-left, .tb-right { display: flex; align-items: center; height: 48px; }
.autosave { display: flex; align-items: center; margin-left: 16px; width: 102px; flex: none; white-space: nowrap; justify-content: space-between; }
.toggle { display: flex; align-items: center; gap: 5px; width: 45px; height: 20px; border: 1px solid #555; border-radius: 10px; background: #fff; padding-left: 2px; color: #444; font-size: 11px; }
.toggle input { appearance: none; flex: none; width: 14px; height: 14px; border-radius: 7px; background: #5f5f5f; }
.save { margin-left: 13px; }
.docname { margin-left: 20px; gap: 4px; padding-top: 2px; }
.search { display: flex; align-items: center; gap: 12px; height: 32px; padding-left: 19px; background: #fafafa; border: 1px solid #c8c8c8; border-radius: 4px; box-shadow: 0 1px 1px #ccc; }
.search input { flex: 1; min-width: 0; padding-top: 2px; }
.search input::placeholder { color: #616161; opacity: 1; }
.tb-right { justify-content: flex-end; }
.email { padding-top: 2px; }
.avatar { width: 24px; height: 24px; border-radius: 12px; background: #cfcfcf; margin: 0 12px 0 11px; }
.tb-btn { width: 46px; height: 32px; }
.win-btn { width: 48px; height: 32px; }

.menu { display: flex; align-items: center; height: 30px; padding: 0 12px; }
.menu-tab { height: 24px; margin-left: 10px; padding: 2px 13px 0 0; position: relative; }
.menu-tab:first-child { padding-right: 16px; }
.menu-tab.on { font-weight: 600; }
.menu-tab.on::after { content: ""; position: absolute; left: 0; right: 13px; bottom: 0; height: 2px; background: #0f703b; }
.comments, .share { height: 24px; border-radius: 4px; gap: 5px; font-weight: 600; }
.comments { width: 100px; background: #fff; border: 1px solid #d0d0d0; margin-right: 8px; }
.share { width: 68px; background: #107c41; color: #fff; }

.ribbon { display: flex; height: 100px; margin: 0 8px; background: #fff; border-radius: 8px; box-shadow: 0 1px 2px #bbb; padding: 3px 0 2px; }
.group { position: relative; display: flex; flex-direction: column; justify-content: space-between; flex: none; }
.group::after { content: ""; position: absolute; right: 0; top: 2px; bottom: 4px; width: 1px; background: #d0d0d0; }
.gbody { display: flex; flex: 1; }
.glabel { display: flex; align-items: center; height: 16px; font-size: 11px; }
.glabel span { flex: 1; text-align: center; }
.launch { width: 16px; height: 16px; }
.g-undo { width: 60px; } .g-clip { width: 100px; } .g-font { width: 236px; } .g-align { width: 197px; } .g-num { width: 162px; }
.g-styles { width: 198px; } .g-cells { width: 98px; } .g-edit { width: 149px; } .g-an { width: 62px; }
.g-undo .glabel { padding-left: 4px; }
.stack { display: flex; flex-direction: column; flex: none; }
.row26 { display: flex; align-items: center; height: 26px; }
.undo-row { gap: 6px; padding-left: 16px; }
.big { flex-direction: column; justify-content: flex-start; padding-top: 6px; }
.big > svg:first-child { margin-bottom: 3px; }
.big span { display: flex; align-items: center; gap: 3px; height: 16px; }
.paste { width: 50px; margin-left: 4px; color: #aaa; }
.paste > svg:first-child { margin-bottom: 4px; }
.paste > .chev { margin-top: 3px; }
.clip-stack .row26 { gap: 5px; }
.clip-stack .row26 button:first-child { width: 20px; }
.two { display: flex; flex-direction: column; gap: 7px; padding-top: 9px; flex: none; }
.font-a, .font-b, .al-row, .num-a, .num-b, .wr-row { display: grid; height: 24px; align-items: center; justify-items: center; }
.font-a { grid-template-columns: 123px 43px 26px 26px; column-gap: 2px; padding-left: 8px; }
.font-b { grid-template-columns: 26px 26px 25px 13px 9px 20px 17px 5px 24px 13px 4px 24px 13px; padding-left: 7px; }
.combo { position: relative; display: flex; align-items: center; width: 100%; height: 24px; border: 1px solid #c4c4c4; border-radius: 4px; }
.combo select { appearance: none; width: 100%; height: 22px; padding-left: 2px; font-size: 12px; }
.combo svg { position: absolute; right: 2px; top: 8px; pointer-events: none; }
.fmt { font-size: 13px; color: #444; }
.fmt i { font-family: "Liberation Serif", serif; font-size: 15px; }
.vsep { width: 1px; height: 24px; background: #d0d0d0; }
.vsep.tall { height: 61px; margin: 9px 6px 0 5px; }
.al-row { grid-template-columns: 26px 26px 26px 26px 8px; padding-left: 7px; width: 137px; }
.indent { width: 26px; justify-self: start; }
.pressed { width: 24px; height: 24px; border: 1px solid #555; border-radius: 4px; background: #eee; }
.wr-row { grid-template-columns: 24px 12px; }
.num-a { grid-template-columns: 145px; padding-left: 8px; }
.num-b { grid-template-columns: 26px 12px 4px 26px 26px 2px 27px 26px; padding-left: 6px; }
.sym { font-size: 18px; color: #444; }
.w-cond { width: 80px; margin-left: 5px; } .w-table { width: 56px; } .w-cell { width: 52px; }
.cells-row { padding-left: 12px; gap: 4px; }
.cells-row button:first-child { gap: 4px; width: 56px; justify-content: flex-start; }
.cells-row span { font-size: 11px; padding-top: 2px; }
.cells-row.wide { gap: 8px; }
.edit-stack { padding-left: 12px; }
.edit-stack .row26 { gap: 5px; }
.edit-stack .row26 button:first-child { width: 16px; }
.w-sort { width: 48px; margin-left: 5px; } .w-find { width: 46px; }
.w-an { width: 62px; } .w-an.big { padding-top: 4px; }
.collapse { margin-left: auto; align-self: flex-end; width: 30px; height: 24px; }

.formula { display: flex; align-items: flex-start; margin: 8px 8px 7px; height: 86px; flex: none; }
.namebox { position: relative; display: flex; align-items: center; width: 102px; height: 26px; background: #fff; border: 1px solid #d0d0d0; border-radius: 4px; padding: 0 5px 0 6px; }
.namebox::before { content: ""; position: absolute; top: 0; right: 2px; width: 17px; height: 1px; background: #000; }
.namebox input { flex: 1; min-width: 0; font-size: 12px; }
.dots { display: flex; flex-direction: column; align-items: center; justify-content: center; gap: 2px; width: 20px; height: 26px; }
.dots i { width: 2px; height: 2px; background: #999; }
.fxbox { display: flex; align-items: center; justify-content: space-between; width: 74px; height: 26px; padding: 0 5px 0 6px; background: #fff; border: 1px solid #d0d0d0; border-radius: 4px; margin-right: 4px; }
.fx { font: italic 18px/20px "Liberation Serif", serif; }
.fbar { display: flex; flex: 1; height: 86px; background: #fff; border: 1px solid #d0d0d0; border-radius: 4px; align-items: flex-start; }
.fbar textarea { flex: 1; height: 80px; resize: none; }
.fbar button { width: 18px; height: 20px; }

.sheet { display: flex; flex: 1; min-height: 0; }
.grid-wrap { flex: 1; min-width: 0; overflow: hidden; position: relative; }
.grid-wrap::after { content: ""; position: absolute; right: 0; top: 28px; bottom: 0; width: 1px; background: #a6a6a6; }
.grid { width: 100%; table-layout: fixed; border-collapse: separate; border-spacing: 0; font: 20px/29px Lato, "Open Sans", sans-serif; }
.col-h { width: 40px; } .col-a { width: 60px; } .col-b { width: 224px; } .col-c { width: 119px; } .col-d { width: 200px; } .col-e { width: 405px; } .col-f { width: 200px; }
.grid th { font-weight: 400; padding: 0; text-align: center; color: #444; }
.grid thead th { height: 29px; line-height: 24px; padding-top: 2px; border-bottom: 1px solid #a6a6a6; background: linear-gradient(#efefef, #c8c8c8) right / 1px 100% no-repeat; }
.grid thead th.sel { background: #d3f0e0; color: #217346; border-right: 1px solid #b5cdbf; }
.corner svg { margin-left: 15px; }
.grid tbody th { height: 30px; background: #e1e1e1; color: #217346; border-bottom: 1px solid #b0b0b0; border-right: 2px solid #217346; }
.grid td { height: 30px; padding: 0 0 0 3px; background: #fff; color: #000; border-right: 1px solid #dcdcdc; border-bottom: 1px solid #dcdcdc; }
.grid td div { width: 100%; height: 29px; white-space: pre; }
.grid td.f { position: relative; background: #c6c6c6; border-bottom-color: #b0b0b0; border-right: 1px solid #217346; box-shadow: inset 1px 0 #fff, inset -1px 0 #fff; }
.grid td.f::before, .grid td.f::after { content: ""; position: absolute; top: 0; bottom: -1px; width: 2px; background: #217346; }
.grid td.f::before { left: -2px; }
.grid td.f::after { right: -2px; }
.grid td.top { background: #fff; border-right-color: #fff; }
.grid td.top::after { width: 5px; right: -3px; background: linear-gradient(#217346, #217346) 0 0 / 5px 4px no-repeat, linear-gradient(#217346, #217346) 2px 5px / 2px 100% no-repeat, #fff; }
.grid td.blue { color: #0070c0; }
.grid td.red { color: #f00; }
.grid td.bold { font-weight: 700; }
.vscroll { display: flex; flex-direction: column; align-items: center; width: 21px; padding: 5px 0 1px; background: #f3f3f3; }
.vtrack { flex: 1; width: 9px; padding-top: 22px; }
.vtrack i { display: block; width: 9px; height: 105px; border-radius: 5px; background: #6e6e6e; }

.sheetbar { display: flex; height: 28px; background: #f5f5f5; flex: none; }
.sheets { display: flex; flex: 1; min-width: 0; border-top: 1px solid #a6a6a6; padding-left: 15px; }
.nav { width: 28px; height: 26px; }
.more { width: 30px; height: 22px; color: #0f6b37; font-weight: 700; font-size: 14px; border-right: 1px solid #a6a6a6; margin-top: 2px; padding-bottom: 2px; }
.stab { height: 24px; color: #444; padding-top: 2px; }
.t1 { width: 132px; border-right: 1px solid #a6a6a6; }
.t2 { width: 109px; }
.stab.on { width: 66px; margin-top: -1px; height: 25px; padding-top: 3px; background: #fff; color: #107c41; font-weight: 700; border: 1px solid #a6a6a6; border-top: 0; border-bottom: 2px solid #217346; }
.add { margin-left: 32px; width: 16px; height: 26px; }
.hscroll { display: flex; align-items: center; width: 41%; border-top: 1px solid #a6a6a6; padding-right: 23px; }
.handle { display: flex; align-items: center; justify-content: center; width: 28px; height: 27px; background: #efefef; margin-right: 5px; }
.htrack { flex: 1; margin: 0 4px; height: 9px; }
.htrack i { display: block; width: 61%; height: 9px; border-radius: 5px; background: #6e6e6e; }

.status { display: flex; align-items: center; height: 22px; flex: none; border-top: 1px solid #fff; background: #f3f3f3; font-size: 11px; padding: 0 7px 2px 8px; }
.access { gap: 4px; margin-left: 19px; }
.view { width: 40px; height: 21px; }
.view.on { background: #dedede; }
.zoom { width: 19px; height: 20px; }
.slider { appearance: none; width: 100px; height: 15px; background: linear-gradient(#777, #777) 50% 50% / 100% 1px no-repeat, linear-gradient(#777, #777) 50% 50% / 1px 7px no-repeat; }
.slider::-webkit-slider-thumb { appearance: none; width: 5px; height: 11px; background: #555; }
.pct { width: 35px; text-align: right; }

.taskbar { display: flex; align-items: center; height: 40px; flex: none; background: linear-gradient(90deg, #d4d4d5, #dedbdd 45%, #e3d7dc); }
.start { width: 48px; height: 40px; }
.tsearch { display: flex; align-items: center; gap: 11px; flex: 0 1 344px; height: 40px; background: #fff; border: 1px solid #c4c4c4; padding-left: 11px; font-size: 14px; }
.tsearch input { flex: 1; min-width: 0; padding-top: 2px; }
.tsearch input::placeholder { color: #333; opacity: 1; }
.tk { width: 49px; height: 40px; position: relative; flex: none; }
.ct, .tv { width: 48px; }
.tv { margin-right: 2px; }
.run::after { content: ""; position: absolute; left: 5px; right: 4px; bottom: 0; height: 2px; background: #0078d7; }
.cur { background: #f2eef0; width: 48px; margin-left: 1px; }
.cur::after { left: 0; right: 0; }
.weather { gap: 8px; font-size: 13px; margin-right: 10px; }
.tray { width: 24px; height: 40px; }
.kb { width: 30px; }
.clock { display: flex; flex-direction: column; align-items: center; line-height: 18px; width: 66px; margin-right: 2px; }
.notif { position: relative; width: 42px; height: 40px; margin-right: 3px; }
.notif span { position: absolute; right: 8px; bottom: 3px; width: 17px; height: 17px; border: 1px solid #666; border-radius: 9px; background: #ddd8da; line-height: 15px; text-align: center; }
.desk { width: 5px; height: 40px; border-left: 1px solid #aaa; }
</style>
